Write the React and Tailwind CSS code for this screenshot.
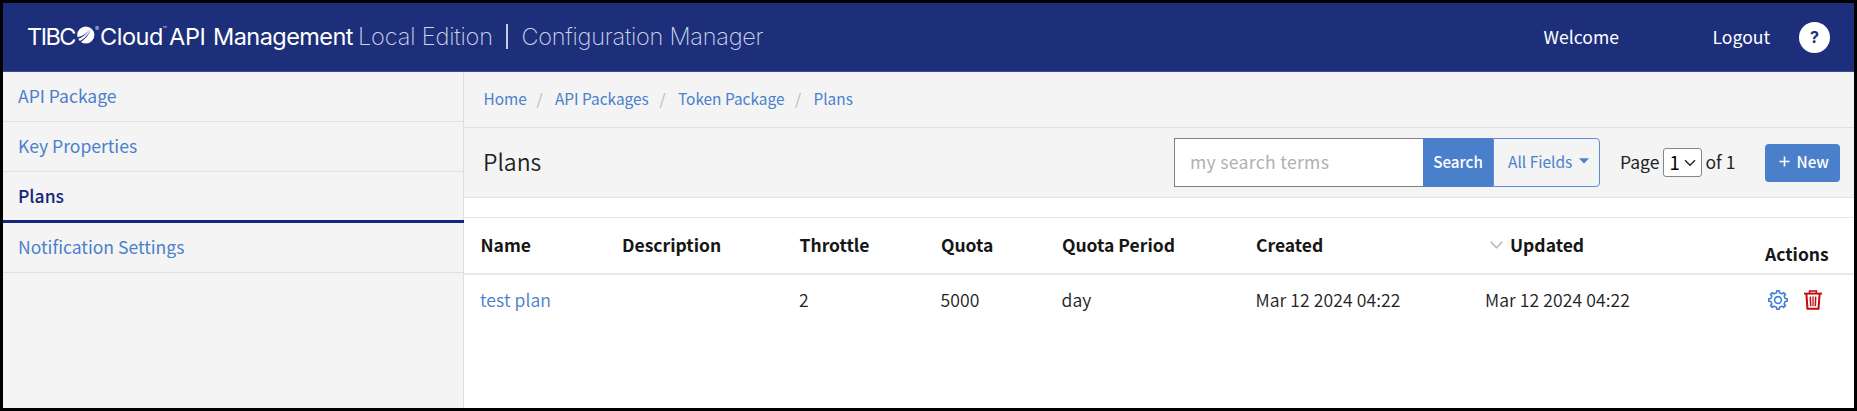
const columns = "grid grid-cols-[141.5px_177.5px_141.5px_121px_194px_229.5px_279.5px_90px]";

const crumbs = [
  { label: "Home", width: "w-[53px]" },
  { label: "API Packages", width: "w-[104.5px]" },
  { label: "Token Package", width: "w-[117px]" },
];

const gearPoints = (() => {
  const teeth = 8;
  const step = 360 / teeth;
  const profile = [
    [-12, 7.3],
    [-8, 9.3],
    [8, 9.3],
    [12, 7.3],
  ];
  const out = [];
  for (let i = 0; i < teeth; i++) {
    for (const [offset, r] of profile) {
      const a = ((i * step + offset - 90) * Math.PI) / 180;
      out.push(`${(11 + r * Math.cos(a)).toFixed(2)},${(11 + r * Math.sin(a)).toFixed(2)}`);
    }
  }
  return out.join(" ");
})();

function GearIcon() {
  return (
    <svg width="22" height="22" viewBox="0 0 22 22" fill="none" stroke="#3f7fd6" strokeWidth="1.6" strokeLinejoin="round">
      <polygon points={gearPoints} />
      <circle cx="11" cy="11" r="3.4" />
    </svg>
  );
}

function TrashIcon() {
  return (
    <svg width="18" height="20" viewBox="0 0 18 20" fill="none" stroke="#c20a12" strokeWidth="1.6">
      <path d="M0 3.6h18" strokeWidth="1.9" />
      <path d="M5.6 3V1h6.8v2" strokeWidth="1.6" />
      <path d="M2.4 4.2l1.1 14.6h11L15.6 4.2" strokeWidth="2" />
      <path d="M6.3 6.6l.4 9.6M11.7 6.6l-.4 9.6" strokeWidth="1.5" />
      <path d="M9 6.6v9.6" strokeWidth="1.3" />
    </svg>
  );
}

function Brand() {
  return (
    <div className="flex items-center whitespace-nowrap pb-px font-[Inter,sans-serif] text-[23.5px] leading-[28px] text-white">
      <span className="w-[50px] font-[370] tracking-[-1.5px]">TIBC</span>
      <svg className="mb-[3px] w-[18px] shrink-0" width="18" height="18" viewBox="0 0 18 18">
        <circle cx="8.8" cy="9" r="8.6" fill="#fff" />
        <path d="M-1 13.4C5 12.2 10 8.5 13.7 1.8 11 6.8 6 10.4-1 11.6z" fill="#1d2f7a" />
        <path d="M1 16C7.5 13.2 11.5 8.5 14.2 2.6 12.2 8.8 8.5 13.2 3 16.8z" fill="#1d2f7a" />
      </svg>
      <span className="w-[5px] self-start pt-[3px] text-[6px] leading-[6px] text-[#d0d5e8]">®</span>
      <span className="w-[62.5px] font-[370] tracking-[-0.45px]">Cloud</span>
      <span className="w-[6.5px] self-start pt-[4px] text-[7px] leading-[6px] text-[#d0d5e8]">™</span>
      <span className="w-[44px] font-[370] tracking-[-0.3px]">API</span>
      <span className="w-[145px] font-[370] tracking-[-0.55px]">Management</span>
      <span className="w-[148px] font-extralight tracking-[-0.15px] text-[#d0d5e8]">Local Edition</span>
      <span className="h-[25px] w-[1.5px] bg-[#c5cbe2]" />
      <span className="pl-[14px] font-extralight tracking-[-0.25px] text-[#d0d5e8]">Configuration Manager</span>
    </div>
  );
}

function Sidebar() {
  const link = "flex h-[50px] items-center border-b border-[#dfdfdf] pl-[15px] text-[#4a80cc]";
  return (
    <nav className="w-[461px] shrink-0 bg-[#f4f4f4] text-[17.55px]">
      <div className="h-full border-r border-[#dedede]">
        <a className={link}>API Package</a>
        <a className={link}>Key Properties</a>
        <a className="-mr-px flex h-[51px] items-center border-b-[3px] border-[#15257c] pl-[15px] font-medium text-[#15257c]">Plans</a>
        <a className={link}>Notification Settings</a>
      </div>
    </nav>
  );
}

function Toolbar() {
  return (
    <div className="flex h-[70px] items-center border-b border-[#e2e2e2] bg-[#f4f4f4] pl-[19px]">
      <h1 className="w-[691px] pb-[3px] text-[23px] font-[350] text-[#222]">Plans</h1>
      <div className="flex h-[49px] w-[426px] text-[15.5px]">
        <div className="flex w-[249px] items-center border border-r-0 border-[#808080] bg-white pl-[15px] text-[17.6px] tracking-[0.3px] text-[#b0b0b0]">my search terms</div>
        <button className="w-[70px] bg-[#4a80cb] pb-[2px] text-[15.2px] font-medium text-white">Search</button>
        <button className="flex flex-1 items-center rounded-r-[4px] border border-[#5b8ed4] pb-[2px] pl-[14px] text-[#4a80cc]">
          All Fields
          <svg className="mb-px ml-[7px]" width="10" height="6" viewBox="0 0 10 6">
            <path d="M0 .2h10L5 5.6z" fill="#4a80cc" />
          </svg>
        </button>
      </div>
      <div className="flex items-center pl-[20px] text-[17.5px] text-[#222]">
        <span className="w-[43px]">Page</span>
        <div className="flex h-[29px] w-[39px] items-center rounded-[3px] border border-[#858585] bg-white pl-[5.5px] text-[18.5px] text-black">
          1
          <svg className="ml-[4px]" width="12" height="8" viewBox="0 0 12 8" fill="none" stroke="#222" strokeWidth="1.4">
            <path d="M1 1.3L6 6.3l5-5" />
          </svg>
        </div>
        <span className="w-[63px] pl-[3.5px]">of 1</span>
      </div>
      <button className="flex h-[38px] w-[75px] items-center rounded-[4px] bg-[#4a80cb] pb-[2px] pl-[14px] text-[15.2px] font-medium text-white">
        <svg className="mr-[6.5px]" width="11" height="11" viewBox="0 0 11 11" stroke="#fff" strokeWidth="1.6">
          <path d="M5.5 .5v10M.5 5.5h10" />
        </svg>
        New
      </button>
    </div>
  );
}

function PlansTable() {
  return (
    <div className="mt-[19px] whitespace-nowrap border-t border-[#e6e6e6] text-[17.6px] text-[#222]">
      <div className={`${columns} h-[57px] items-center border-b-2 border-[#e8e8e8] pl-[16.5px] text-[17.5px] font-bold text-[#161616]`}>
        <span>Name</span>
        <span>Description</span>
        <span>Throttle</span>
        <span>Quota</span>
        <span>Quota Period</span>
        <span>Created</span>
        <span className="flex items-center">
          <svg className="mb-px ml-[4px] mr-[7.5px]" width="13" height="8" viewBox="0 0 13 8" fill="none" stroke="#b5b5b5" strokeWidth="1.5">
            <path d="M.8 .8l5.7 5.9L12.2 .8" />
          </svg>
          Updated
        </span>
        <span className="pt-[17px]">Actions</span>
      </div>
      <div className={`${columns} h-[50px] items-center pl-[16px] font-[350] tracking-[0.08px]`}>
        <a className="text-[#4a80cc]">test plan</a>
        <span />
        <span>2</span>
        <span>5000</span>
        <span>day</span>
        <span>Mar 12 2024 04:22</span>
        <span>Mar 12 2024 04:22</span>
        <span className="flex items-center pl-[2px]">
          <GearIcon />
          <span className="pl-[15px]"><TrashIcon /></span>
        </span>
      </div>
    </div>
  );
}

export default function App() {
  return (
    <div className="flex h-[411px] w-[1857px] flex-col overflow-hidden border-[3px] border-black bg-white font-['Noto_Sans_CJK_SC',sans-serif]">
      <header className="flex h-[69px] shrink-0 items-center justify-between border-b border-[#3a4a8c] bg-[#1d2f7a] pl-[24px] pr-[24px]">
        <Brand />
        <div className="flex items-center text-[17.6px] text-white">
          <span className="w-[169px]">Welcome</span>
          <span className="w-[86.5px]">Logout</span>
          <span className="flex size-[31px] items-center justify-center rounded-full bg-white font-[Inter,sans-serif] text-[16px] font-bold text-[#1d2f7a]">?</span>
        </div>
      </header>
      <div className="flex min-h-0 flex-1">
        <Sidebar />
        <main className="flex-1">
          <div className="flex h-[56px] items-center border-b border-[#e0e0e0] bg-[#f4f4f4] pb-px pl-[19.5px] text-[15.4px] text-[#4a80cc]">
            {crumbs.map((c) => (
              <div key={c.label} className="flex">
                <a className={c.width}>{c.label}</a>
                <span className="w-[18.5px] text-[#b8b8b8]">/</span>
              </div>
            ))}
            <a>Plans</a>
          </div>
          <Toolbar />
          <PlansTable />
        </main>
      </div>
    </div>
  );
}
